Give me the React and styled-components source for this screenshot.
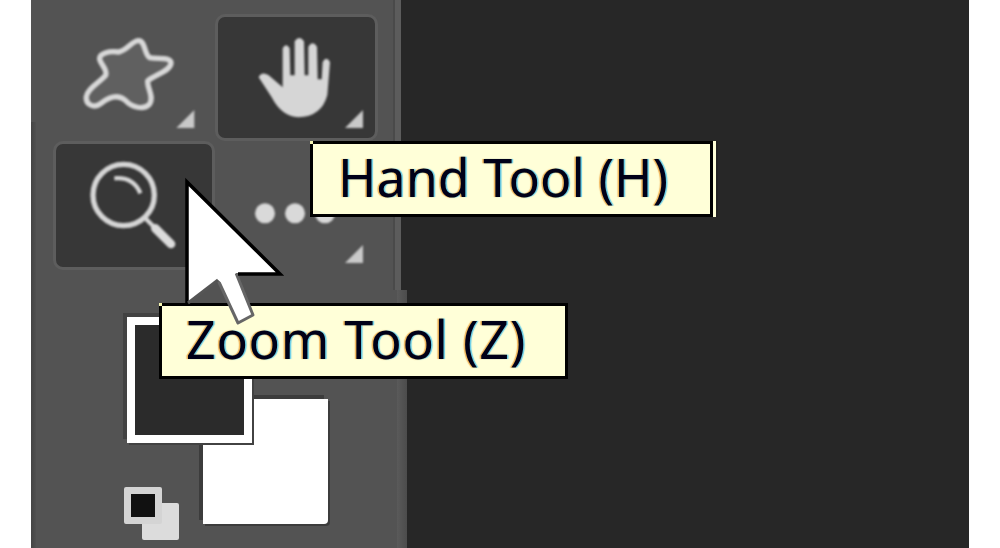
import React from 'react';
import styled, { createGlobalStyle } from 'styled-components';

const GlobalStyle = createGlobalStyle`
  html, body {
    margin: 0;
    padding: 0;
    background: #fff;
  }
`;

const Page = styled.div`
  position: relative;
  width: 1000px;
  height: 548px;
  padding: 0 31px;
  box-sizing: border-box;
  overflow: hidden;
  background: #fff;
  font-family: "Noto Sans", "Liberation Sans", Arial, sans-serif;
`;

const Workspace = styled.main`
  display: flex;
  flex-direction: column;
  align-items: flex-start;
  height: 100%;
  background: #272727;
`;

const TopPanel = styled.section`
  width: 370px;
  height: 290px;
  padding: 14px 0 0 22px;
  box-sizing: border-box;
  background:
    linear-gradient(90deg, #444, #505050) 0 122px / 5px 100% no-repeat,
    linear-gradient(90deg, #4a4a4a 0 30%, #5c5c5c 30% 100%) right top / 8px 100% no-repeat,
    #535353;
`;

const ToolGrid = styled.div`
  display: grid;
  grid-template-columns: 162px 163px;
  grid-template-rows: 127px 129px;
`;

const ToolButton = styled.div`
  box-sizing: border-box;
  border-radius: 10px;
  border: 3px solid ${(p) => (p.$active ? '#5d5d5d' : 'transparent')};
  background: ${(p) => (p.$active ? '#373737' : 'transparent')};
  overflow: hidden;
`;

const ToolIcon = styled.svg`
  display: block;
  width: calc(100% + 6px);
  height: calc(100% + 6px);
  margin: -3px;
  filter: blur(1px);
`;

const BottomPanel = styled.section`
  position: relative;
  width: 376px;
  flex: 1;
  background:
    linear-gradient(90deg, #444, #505050) 0 0 / 5px 100% no-repeat,
    linear-gradient(90deg, #5a5a5a, #4c4c4c) right top / 10px 100% no-repeat,
    #535353;
`;

// colour swatches overlap each other, so they are stacked by offset
const Swatch = styled.div`
  position: absolute;
  box-sizing: border-box;
`;

const ForeSwatch = styled(Swatch)`
  left: 96px;
  top: 27px;
  width: 125px;
  height: 126px;
  z-index: 2;
  background: #2b2b2b;
  border: 8px solid #fff;
  box-shadow: -4px -4px 0 #424242, 2px 2px 0 #424242;
`;

const BackSwatch = styled(Swatch)`
  left: 172px;
  top: 109px;
  width: 125px;
  height: 125px;
  z-index: 1;
  background: #fff;
  box-shadow: -4px -4px 0 #3c3c3c, 2px 2px 0 #3c3c3c;
  border-radius: 0 0 4px 0;
`;

const MiniFore = styled(Swatch)`
  left: 93px;
  top: 197px;
  width: 38px;
  height: 37px;
  z-index: 2;
  background: #111;
  border: 7px solid #d4d4d4;
  border-radius: 2px;
  filter: blur(0.6px);
`;

const MiniBack = styled(Swatch)`
  left: 111px;
  top: 213px;
  width: 37px;
  height: 37px;
  z-index: 1;
  background: #dcdcdc;
  border-radius: 2px;
  filter: blur(0.6px);
`;

const Tooltip = styled.div`
  position: absolute;
  z-index: 5;
  box-sizing: border-box;
  height: 76px;
  padding-left: 24px;
  border: 3px solid #000;
  background: #ffffd8;
  color: #000018;
  font-size: 52px;
  line-height: 66px;
  white-space: nowrap;
  text-shadow: -1.5px 0 1px rgba(230, 130, 0, 0.6), 1.5px 0 1px rgba(0, 170, 240, 0.6);

  &::before {
    content: '';
    position: absolute;
    left: -3px;
    top: -3px;
    width: 3px;
    height: 3px;
    background: #f5f5b0;
  }
`;

const HandTip = styled(Tooltip)`
  left: 310px;
  top: 141px;
  width: 403px;
  padding-left: 25px;
  box-shadow: 3px 0 0 #ffffd8, 5px 0 0 #222;
`;

const ZoomTip = styled(Tooltip)`
  left: 159px;
  top: 303px;
  width: 409px;
  letter-spacing: 0.7px;
`;

const Cursor = styled.svg`
  position: absolute;
  left: 0;
  top: 0;
  z-index: 6;
  filter: blur(0.6px);
`;

const triangle = (x, y) => (
  <polygon points={`${x},${y + 54} ${x + 54},${y + 54} ${x + 54},${y}`} fill="#c9c9c9" />
);

function Blob() {
  return (
    <ToolIcon viewBox="68 42 486 381">
      <path
        d="M208 178 C206 160 235 152 265 156 C290 152 305 122 325 122 C345 122 342 165 358 173 C385 178 420 170 422 188 C424 212 372 225 352 243 C350 265 372 288 358 312 C340 332 304 322 284 300 C262 282 235 292 212 310 C190 328 165 312 168 290 C172 265 205 250 226 226 C232 208 212 195 208 178 Z"
        fill="#606060"
        stroke="#d8d8d8"
        strokeWidth="16"
        strokeLinejoin="round"
      />
      {triangle(438, 330)}
    </ToolIcon>
  );
}

function Hand() {
  return (
    <ToolIcon viewBox="555 42 489 381">
      <path
        d="M686 232 Q695 213 716 226 L758 262 L758 145 Q768 126 779 145 L781 226 L794 226 L794 124 Q808 104 822 124 L824 226 L835 226 L835 140 Q848 120 861 140 L863 238 L875 238 L878 186 Q889 166 900 186 L892 285 Q875 350 805 352 Q755 350 725 292 Z"
        fill="#d6d6d6"
      />
      {triangle(945, 330)}
    </ToolIcon>
  );
}

function Magnifier() {
  return (
    <ToolIcon viewBox="68 423 486 387">
      <circle cx="280" cy="585" r="92" fill="none" stroke="#d6d6d6" strokeWidth="16" />
      <path d="M252 535 Q310 530 330 580" fill="none" stroke="#d6d6d6" strokeWidth="13" />
      <path d="M345 655 L380 690" stroke="#d6d6d6" strokeWidth="13" />
      <path d="M375 685 L422 732" stroke="#dcdcdc" strokeWidth="26" strokeLinecap="round" />
    </ToolIcon>
  );
}

function More() {
  return (
    <ToolIcon viewBox="555 423 489 387">
      <circle cx="705" cy="640" r="30" fill="#d9d9d9" />
      <circle cx="795" cy="640" r="30" fill="#d9d9d9" />
      <circle cx="885" cy="640" r="30" fill="#d9d9d9" />
      {triangle(945, 735)}
    </ToolIcon>
  );
}

export default function App() {
  return (
    <Page>
      <GlobalStyle />
      <Workspace>
        <TopPanel>
          <ToolGrid>
            <ToolButton><Blob /></ToolButton>
            <ToolButton $active><Hand /></ToolButton>
            <ToolButton $active><Magnifier /></ToolButton>
            <ToolButton><More /></ToolButton>
          </ToolGrid>
        </TopPanel>
        <BottomPanel>
          <ForeSwatch />
          <BackSwatch />
          <MiniFore />
          <MiniBack />
        </BottomPanel>
      </Workspace>
      <HandTip>Hand Tool (H)</HandTip>
      <ZoomTip>Zoom Tool (Z)</ZoomTip>
      <Cursor width="1000" height="548" viewBox="0 0 1000 548">
        <path d="M218 280 L238 323 L253 315 L236 273" fill="#fff" stroke="#666" strokeWidth="3" strokeLinejoin="round" />
        <path d="M188 182 L280 273 L236 273 L225 285 L218 280 L188 303 Z" fill="#fff" />
        <path d="M187 303 L187 182 L280 274 L238 274" fill="none" stroke="#000" strokeWidth="3.5" />
        <path d="M188 303 L218 280" fill="none" stroke="#555" strokeWidth="3" />
      </Cursor>
    </Page>
  );
}
